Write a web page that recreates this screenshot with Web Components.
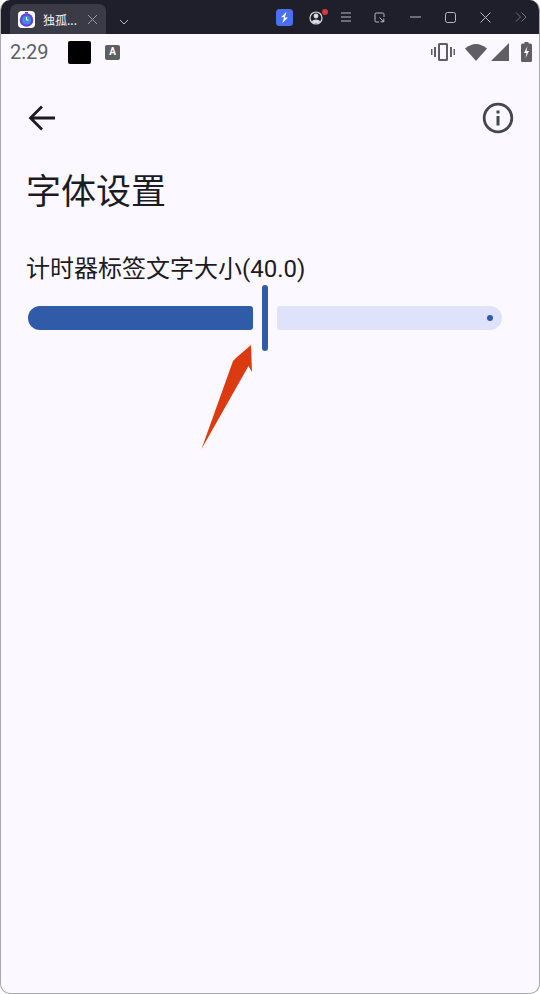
<!DOCTYPE html>
<html lang="zh">
<head>
<meta charset="utf-8">
<title>字体设置</title>
<style>
    html, body {
        margin: 0;
        height: 100%;
        background: #ffffff;
    }
    body {
        font-family: Roboto, "Noto Sans CJK SC", sans-serif;
    }
</style>
</head>
<body>
<app-window>
    <window-bar slot="bar"></window-bar>
    <status-bar slot="status"></status-bar>
    <app-toolbar></app-toolbar>
    <settings-page title-text="字体设置">
        <size-slider label="计时器标签文字大小(40.0)"></size-slider>
    </settings-page>
</app-window>

<script>
class AppWindow extends HTMLElement {
    static {
        customElements.define('app-window', this)
    }
    constructor () {
        super()
        this.attachShadow({mode: 'open'})
        this.shadowRoot.innerHTML = `
            <style>
                :host {
                    display: flex;
                    flex-direction: column;
                    box-sizing: border-box;
                    height: 994px;
                    background: #fbf8ff;
                    border: 1px solid #a9a9ab;
                    border-top: 0;
                    border-radius: 10px;
                    overflow: hidden;
                }
            </style>
            <slot name="bar"></slot>
            <slot name="status"></slot>
            <slot></slot>
        `
    }
}

class WindowBar extends HTMLElement {
    static {
        customElements.define('window-bar', this)
    }
    constructor () {
        super()
        this.attachShadow({mode: 'open'})
        this.shadowRoot.innerHTML = `
            <style>
                :host {
                    display: flex;
                    align-items: flex-end;
                    height: 34px;
                    background: #1e1f2b;
                    color: #b9bac4;
                    padding-left: 9px;
                }
                .tab {
                    display: flex;
                    align-items: center;
                    box-sizing: border-box;
                    width: 96px;
                    height: 30px;
                    padding: 0 8px 0 8px;
                    background: #3a3b47;
                    border-radius: 7px 7px 0 0;
                    color: #f2f2f5;
                    font: 12px "Noto Sans CJK SC", sans-serif;
                }
                .fav {
                    flex: none;
                    width: 17px;
                    height: 17px;
                    margin-right: 8px;
                    background: #fff;
                    border-radius: 4px;
                    display: flex;
                    align-items: center;
                    justify-content: center;
                }
                .name {
                    flex: 1;
                    white-space: nowrap;
                }
                .chev {
                    margin: 0 0 9px 13px;
                }
                .tools {
                    flex: 1;
                    display: flex;
                    align-items: center;
                    height: 34px;
                    margin-left: 147px;
                }
                svg {
                    display: block;
                    flex: none;
                    fill: none;
                    stroke: currentColor;
                }
            </style>
            <div class="tab">
                <div class="fav">
                    <svg width="15" height="15" viewBox="0 0 15 15" style="stroke:none">
                        <circle cx="7.5" cy="8" r="6.8" fill="#6a3fd8"/>
                        <circle cx="7.5" cy="8" r="4.6" fill="#3f8be0"/>
                        <path d="M7.5 5v3h2" fill="none" stroke="#fff" stroke-width="1"/>
                        <rect x="6" y="0" width="3" height="1.5" fill="#6a3fd8"/>
                    </svg>
                </div>
                <span class="name">独孤...</span>
                <svg width="11" height="11" viewBox="0 0 11 11" stroke-width="1" style="color:#9a9ba5"><path d="M1 1l9 9M10 1l-9 9"/></svg>
            </div>
            <svg class="chev" width="10" height="6" viewBox="0 0 10 6" stroke-width="1"><path d="M1 1l4 4 4-4"/></svg>
            <div class="tools">
                <svg width="17" height="17" viewBox="0 0 17 17" style="stroke:none">
                    <rect width="17" height="17" rx="3.5" fill="#4a6ff0"/>
                    <path d="M10.5 2.8 5 8.2h3.2L6.2 14.2 12 8.6H8.8z" fill="#fff"/>
                </svg>
                <svg width="22" height="18" viewBox="0 0 22 18" style="margin-left:16px;stroke:none">
                    <circle cx="7" cy="10" r="6" fill="none" stroke="#d9dae2" stroke-width="1.2"/>
                    <circle cx="7" cy="8" r="2.4" fill="#d9dae2"/>
                    <path d="M2.6 13.4a5 3.6 0 0 1 8.8 0 6 6 0 0 1-8.8 0z" fill="#d9dae2"/>
                    <circle cx="16" cy="4" r="3" fill="#d83a3a"/>
                </svg>
                <svg width="12" height="10" viewBox="0 0 12 10" stroke-width="1" style="margin-left:9px"><path d="M1 1h10M1 5h10M1 9h10"/></svg>
                <svg width="11" height="11" viewBox="0 0 11 11" stroke-width="1" style="margin-left:22px"><path d="M5 10H2.2A1.2 1.2 0 0 1 1 8.800V2.200A1.200 1.200 0 0 1 2.200 1h6.600A1.200 1.200 0 0 1 10 2.200V5M5.500 5.500 9.500 9.500M9.800 6.500v3.300H6.500"/></svg>
                <svg width="11" height="2" viewBox="0 0 11 2" stroke-width="1" style="margin-left:25px"><path d="M0 1h11"/></svg>
                <svg width="11" height="11" viewBox="0 0 11 11" stroke-width="1" style="margin-left:24px"><rect x=".5" y=".5" width="10" height="10" rx="2"/></svg>
                <svg width="11" height="11" viewBox="0 0 11 11" stroke-width="1" style="margin-left:24px"><path d="M.5.500l10 10M10.500.500l-10 10"/></svg>
                <svg width="12" height="10" viewBox="0 0 12 10" stroke-width="1" style="margin-left:24px;color:#70717c"><path d="M1 .5 5.500 5 1 9.500M6.500 .5 11 5 6.500 9.500"/></svg>
            </div>
        `
    }
}

class StatusBar extends HTMLElement {
    static {
        customElements.define('status-bar', this)
    }
    constructor () {
        super()
        this.attachShadow({mode: 'open'})
        this.shadowRoot.innerHTML = `
            <style>
                :host {
                    display: flex;
                    align-items: center;
                    height: 36px;
                    padding: 0 7px 0 9px;
                    color: #5f5f63;
                    font: 20px Roboto, sans-serif;
                }
                .time {
                    width: 58px;
                }
                .shot {
                    width: 23px;
                    height: 23px;
                    background: #000;
                    border-radius: 2px;
                }
                .a {
                    display: flex;
                    justify-content: center;
                    box-sizing: border-box;
                    width: 15px;
                    height: 15px;
                    margin-left: 14px;
                    background: #5f5f63;
                    border-radius: 2px;
                    color: #fff;
                    font: bold 10px/13px Roboto, sans-serif;
                }
                .icons {
                    margin-left: auto;
                    display: flex;
                    align-items: center;
                }
                svg {
                    display: block;
                    flex: none;
                    fill: currentColor;
                }
            </style>
            <span class="time">2:29</span>
            <div class="shot"></div>
            <div class="a">A</div>
            <div class="icons">
                <svg width="24" height="20" viewBox="0 0 24 20">
                    <path d="M7 2.500A1.500 1.500 0 0 1 8.500 1h7A1.500 1.500 0 0 1 17 2.500v15a1.500 1.500 0 0 1-1.500 1.500h-7A1.500 1.500 0 0 1 7 17.500zM9 3v14h6V3z"/>
                    <path d="M0 7h1.500v6H0zM3 5h2v10H3zM19 5h2v10h-2zM22.500 7H24v6h-1.500z"/>
                </svg>
                <svg width="22" height="18" viewBox="0 0 22 18" style="margin-left:10px"><path d="M0 5.500Q11-3.500 22 5.500L11 18z"/></svg>
                <svg width="18" height="18" viewBox="0 0 18 18" style="margin-left:4px"><path d="M18 0v18H0z"/></svg>
                <svg width="11" height="20" viewBox="0 0 11 20" style="margin-left:12px">
                    <path d="M3.500 0h4v1.500h2A1.500 1.500 0 0 1 11 3v15.500a1.500 1.500 0 0 1-1.500 1.500h-8A1.500 1.500 0 0 1 0 18.500V3a1.500 1.500 0 0 1 1.500-1.500h2z"/>
                    <path d="M6.500 4 3 11h2.500L4.500 16 8 9H5.500z" fill="#fff"/>
                </svg>
            </div>
        `
    }
}

class AppToolbar extends HTMLElement {
    static {
        customElements.define('app-toolbar', this)
    }
    constructor () {
        super()
        this.attachShadow({mode: 'open'})
        this.shadowRoot.innerHTML = `
            <style>
                :host {
                    display: flex;
                    align-items: center;
                    justify-content: space-between;
                    height: 96px;
                    padding: 0 25px 0 27px;
                }
                svg {
                    display: block;
                }
            </style>
            <svg width="28" height="26" viewBox="0 0 28 26" fill="none" stroke="#1c1b22" stroke-width="2.800">
                <path d="M27 13H3M14 1.500 2.500 13 14 24.500"/>
            </svg>
            <svg width="32" height="32" viewBox="0 0 32 32" fill="none" stroke="#45464f">
                <circle cx="16" cy="16" r="13.800" stroke-width="2.800"/>
                <path d="M16 14v9.500M16 8.500v3" stroke-width="3"/>
            </svg>
        `
    }
}

class SettingsPage extends HTMLElement {
    static {
        customElements.define('settings-page', this)
    }
    constructor () {
        super()
        this.attachShadow({mode: 'open'})
        this.shadowRoot.innerHTML = `
            <style>
                :host {
                    display: block;
                    padding: 0 37px 0 25px;
                }
                h1 {
                    margin: 0 0 41px;
                    color: #1c1b22;
                    font: 400 35px/46px "Noto Sans CJK SC", sans-serif;
                }
            </style>
            <h1></h1>
            <slot></slot>
        `
    }
    connectedCallback() {
        this.shadowRoot.querySelector('h1').textContent = this.getAttribute('title-text')
    }
}

class SizeSlider extends HTMLElement {
    static {
        customElements.define('size-slider', this)
    }
    constructor () {
        super()
        this.attachShadow({mode: 'open'})
        this.shadowRoot.innerHTML = `
            <style>
                :host {
                    display: block;
                    position: relative;
                }
                .label {
                    color: #1c1b22;
                    font: 400 24px/32px Roboto, "Noto Sans CJK SC", sans-serif;
                }
                .track {
                    display: flex;
                    align-items: center;
                    height: 66px;
                    margin-left: 2px;
                }
                .fill {
                    width: 225px;
                    height: 24px;
                    background: #305ba9;
                    border-radius: 12px 3px 3px 12px;
                }
                .thumb {
                    width: 6px;
                    height: 66px;
                    margin: 0 9px 0 9px;
                    background: #305ba9;
                    border-radius: 3px;
                }
                .rest {
                    flex: 1;
                    display: flex;
                    align-items: center;
                    justify-content: flex-end;
                    box-sizing: border-box;
                    height: 24px;
                    padding-right: 9px;
                    background: #dee3fb;
                    border-radius: 3px 12px 12px 3px;
                }
                .dot {
                    width: 6px;
                    height: 6px;
                    background: #305ba9;
                    border-radius: 50%;
                }
                .arrow {
                    position: absolute;
                    left: 175px;
                    top: 92px;
                }
            </style>
            <div class="label"></div>
            <div class="track">
                <div class="fill"></div>
                <div class="thumb"></div>
                <div class="rest"><div class="dot"></div></div>
            </div>
            <svg class="arrow" width="52" height="106" viewBox="0 0 52 106">
                <path d="M0.500 104 36 12 50 0 51 27 47.500 21z M0.500 104 36 12 32 16z" fill="#dc3a10"/>
            </svg>
        `
    }
    connectedCallback() {
        this.shadowRoot.querySelector('.label').textContent = this.getAttribute('label')
    }
}
</script>
</body>
</html>
